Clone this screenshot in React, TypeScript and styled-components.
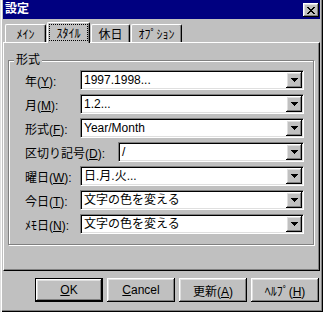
import React from "react";
import styled, { createGlobalStyle } from "styled-components";

const FACE = "#c0c0c0";
const LIGHT = "#dfdfdf";
const SHADOW = "#808080";
const FONT = `"Liberation Sans", "Noto Sans CJK JP", sans-serif`;

const GlobalStyle = createGlobalStyle`
  html, body {
    margin: 0;
    padding: 0;
    background: ${FACE};
  }
  body {
    font-family: ${FONT};
    font-size: 12px;
    color: #000;
  }
`;

const raised = `
  box-shadow: inset -1px -1px #000, inset 1px 1px #fff,
    inset -2px -2px ${SHADOW}, inset 2px 2px ${LIGHT};
`;

const Window = styled.div`
  width: 323px;
  height: 312px;
  box-sizing: border-box;
  background: ${FACE};
  padding: 0 3px 3px 3px;
  box-shadow: inset 1px 0 ${LIGHT}, inset 2px 0 #fff, inset -1px -1px #000,
    inset -2px -2px ${SHADOW};
  display: flex;
  flex-direction: column;
`;

const TitleBar = styled.div`
  height: 19px;
  flex: none;
  background: #000080;
  color: #fff;
  display: flex;
  align-items: flex-start;
  padding: 0 1px 0 2px;
`;

const Caption = styled.span`
  flex: 1;
  font-weight: bold;
  line-height: 18px;
`;

const CloseButton = styled.div`
  width: 16px;
  height: 14px;
  margin-top: 3px;
  background: ${FACE};
  ${raised}
  display: flex;
  align-items: center;
  justify-content: center;
`;

const TabStrip = styled.div`
  height: 20px;
  margin-top: 3px;
  padding-left: 2px;
  display: flex;
  align-items: flex-start;
  gap: 1px;
`;

const Tab = styled.div<{ $width: number; $active?: boolean }>`
  width: ${(p) => p.$width}px;
  height: ${(p) => (p.$active ? 21 : 18)}px;
  margin-top: ${(p) => (p.$active ? 0 : 2)}px;
  box-sizing: border-box;
  position: relative;
  z-index: ${(p) => (p.$active ? 1 : 0)};
  background: ${FACE};
  border-top: 1px solid #fff;
  border-left: 1px solid #fff;
  border-right: 1px solid #000;
  border-radius: 2px 2px 0 0;
  box-shadow: inset -1px 0 ${SHADOW};
  padding-top: ${(p) => (p.$active ? 1 : 0)}px;
  display: flex;
  justify-content: center;
  align-items: ${(p) => (p.$active ? "flex-start" : "center")};
  white-space: nowrap;
`;

const FocusBox = styled.div`
  width: 39px;
  height: 17px;
  box-sizing: border-box;
  border: 1px dotted #000;
  display: flex;
  align-items: center;
  justify-content: center;
`;

const Panel = styled.div`
  height: 229px;
  flex: none;
  box-sizing: border-box;
  background: ${FACE};
  border-top: 1px solid #fff;
  border-left: 1px solid #fff;
  border-right: 1px solid #000;
  border-bottom: 1px solid #000;
  box-shadow: inset -1px -1px ${SHADOW};
  padding: 17px 0 0 4px;
`;

const GroupBox = styled.div`
  position: relative;
  width: 306px;
  height: 185px;
  box-sizing: border-box;
  border: 1px solid ${SHADOW};
  box-shadow: 1px 1px #fff, inset 1px 1px #fff;
  padding: 9px 9px 0 16px;
  display: flex;
  flex-direction: column;
  gap: 4px;
`;

const Legend = styled.span`
  position: absolute;
  top: -7px;
  left: 5px;
  padding: 0 2px;
  line-height: 12px;
  background: ${FACE};
`;

const Row = styled.div`
  height: 20px;
  display: flex;
  align-items: center;
`;

const Label = styled.span<{ $width: number }>`
  width: ${(p) => p.$width}px;
  flex: none;
  white-space: nowrap;
`;

const Combo = styled.div`
  flex: 1;
  height: 20px;
  box-sizing: border-box;
  background: #fff;
  border: 1px solid;
  border-color: ${SHADOW} #fff #fff ${SHADOW};
  box-shadow: inset 1px 1px #000, inset -1px -1px ${LIGHT};
  padding: 1px;
  display: flex;
`;

const ComboText = styled.span`
  flex: 1;
  padding-left: 2px;
  line-height: 16px;
  white-space: nowrap;
  overflow: hidden;
`;

const DropButton = styled.div`
  width: 16px;
  height: 16px;
  flex: none;
  background: ${FACE};
  ${raised}
  display: flex;
  align-items: center;
  justify-content: center;
`;

const ButtonRow = styled.div`
  margin-top: 7px;
  padding-right: 1px;
  display: flex;
  justify-content: flex-end;
  gap: 4px;
`;

const PushButton = styled.button<{ $default?: boolean }>`
  width: 68px;
  height: 24px;
  box-sizing: border-box;
  padding: 0;
  margin: 0;
  font-family: ${FONT};
  font-size: 12px;
  color: #000;
  background: ${FACE};
  border: ${(p) => (p.$default ? "1px solid #000" : "none")};
  ${raised}
`;

const Key = styled.u`
  text-decoration-thickness: 1px;
  text-underline-offset: 1px;
`;

const CloseGlyph = () => {
  const rows = ["11000011", "01100110", "00111100", "00011000", "00111100", "01100110", "11000011"];
  return (
    <svg width="8" height="7" shapeRendering="crispEdges">
      {rows.map((r, y) =>
        r.split("").map((c, x) => (c === "1" ? <rect key={`${x}-${y}`} x={x} y={y} width="1" height="1" fill="#000" /> : null))
      )}
    </svg>
  );
};

const Arrow = () => (
  <svg width="7" height="4" shapeRendering="crispEdges">
    <path d="M0 0h7v1h-1v1h-1v1h-1v1h-1v-1h-1v-1h-1v-1h-1z" fill="#000" />
  </svg>
);

const tabs = [
  { label: "ﾒｲﾝ", width: 41 },
  { label: "ｽﾀｲﾙ", width: 43, active: true },
  { label: "休日", width: 39 },
  { label: "ｵﾌﾟｼｮﾝ", width: 51 },
];

const rows = [
  { name: "年", key: "Y", value: "1997.1998...", width: 55 },
  { name: "月", key: "M", value: "1.2...", width: 55 },
  { name: "形式", key: "F", value: "Year/Month", width: 55 },
  { name: "区切り記号", key: "D", value: "/", width: 93 },
  { name: "曜日", key: "W", value: "日.月.火...", width: 55 },
  { name: "今日", key: "T", value: "文字の色を変える", width: 55 },
  { name: "ﾒﾓ日", key: "N", value: "文字の色を変える", width: 55 },
];

const App = () => {
  return (
    <>
      <GlobalStyle />
      <Window>
        <TitleBar>
          <Caption>設定</Caption>
          <CloseButton>
            <CloseGlyph />
          </CloseButton>
        </TitleBar>
        <TabStrip>
          {tabs.map((t) => (
            <Tab key={t.label} $width={t.width} $active={t.active}>
              {t.active ? <FocusBox>{t.label}</FocusBox> : t.label}
            </Tab>
          ))}
        </TabStrip>
        <Panel>
          <GroupBox>
            <Legend>形式</Legend>
            {rows.map((r) => (
              <Row key={r.key}>
                <Label $width={r.width}>
                  {r.name}(<Key>{r.key}</Key>):
                </Label>
                <Combo>
                  <ComboText>{r.value}</ComboText>
                  <DropButton>
                    <Arrow />
                  </DropButton>
                </Combo>
              </Row>
            ))}
          </GroupBox>
        </Panel>
        <ButtonRow>
          <PushButton $default>
            <Key>O</Key>K
          </PushButton>
          <PushButton>
            <Key>C</Key>ancel
          </PushButton>
          <PushButton>
            更新(<Key>A</Key>)
          </PushButton>
          <PushButton>
            ﾍﾙﾌﾟ(<Key>H</Key>)
          </PushButton>
        </ButtonRow>
      </Window>
    </>
  );
};

export default App;
